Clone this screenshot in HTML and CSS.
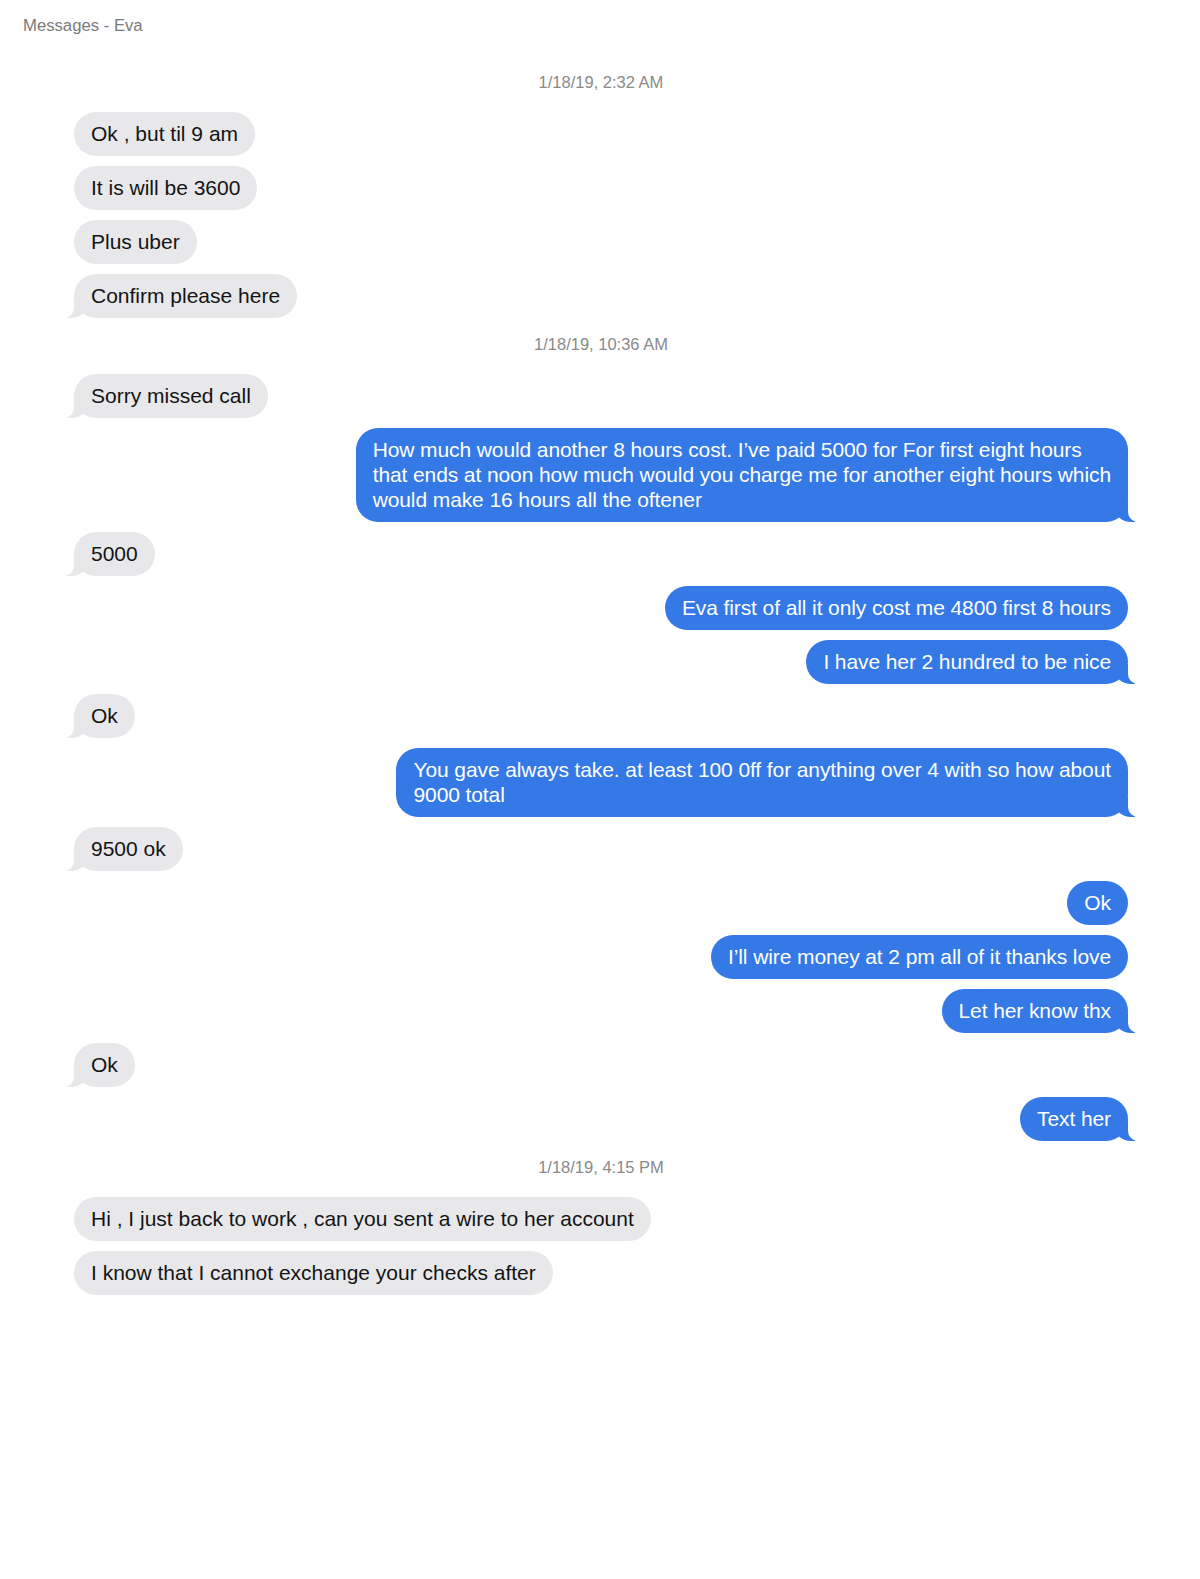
FILE: index.html
```html
<!DOCTYPE html>
<html lang="en">
<head>
<meta charset="utf-8">
<title>Messages - Eva</title>
<link rel="stylesheet" href="styles.css">
</head>
<body>
<div class="page">
  <div class="title">Messages - Eva</div>
  <div class="thread">
    <div class="stamp">1/18/19, 2:32 AM</div>
    <div class="bubble in">Ok , but til 9 am</div>
    <div class="bubble in">It is will be 3600</div>
    <div class="bubble in">Plus uber</div>
    <div class="bubble in tail">Confirm please here</div>
    <div class="stamp">1/18/19, 10:36 AM</div>
    <div class="bubble in tail">Sorry missed call</div>
    <div class="bubble out tail">How much would another 8 hours cost. I’ve paid 5000 for For first eight hours<br>that ends at noon how much would you charge me for another eight hours which<br>would make 16 hours all the oftener</div>
    <div class="bubble in tail">5000</div>
    <div class="bubble out">Eva first of all it only cost me 4800 first 8 hours</div>
    <div class="bubble out tail">I have her 2 hundred to be nice</div>
    <div class="bubble in tail">Ok</div>
    <div class="bubble out tail">You gave always take. at least 100 0ff for anything over 4 with so how about<br>9000 total</div>
    <div class="bubble in tail">9500 ok</div>
    <div class="bubble out">Ok</div>
    <div class="bubble out">I’ll wire money at 2 pm all of it thanks love</div>
    <div class="bubble out tail">Let her know thx</div>
    <div class="bubble in tail">Ok</div>
    <div class="bubble out tail">Text her</div>
    <div class="stamp">1/18/19, 4:15 PM</div>
    <div class="bubble in">Hi , I just back to work , can you sent a wire to her account</div>
    <div class="bubble in">I know that I cannot exchange your checks after</div>
  </div>
</div>
</body>
</html>
```
FILE: styles.css
```css
html, body {
  margin: 0;
  padding: 0;
  background: #ffffff;
}

.page {
  width: 1200px;
  min-height: 1579px;
  box-sizing: border-box;
  padding-top: 16px;
  font-family: "Liberation Sans", Arial, Helvetica, sans-serif;
}

.title {
  padding-left: 23px;
  font-size: 16.7px;
  line-height: 20px;
  color: #7a7a7a;
  margin-bottom: 30px;
}

.thread {
  display: flex;
  flex-direction: column;
  gap: 10px;
  padding: 0 72px 0 74px;
}

.stamp {
  align-self: center;
  font-size: 16.5px;
  line-height: 20px;
  color: #8a8a8a;
  padding: 6px 0 10px;
}

.bubble {
  position: relative;
  font-size: 21px;
  line-height: 25px;
  padding: 9px 17px 10px;
  border-radius: 22px;
  white-space: nowrap;
}

.bubble.in {
  align-self: flex-start;
  background: #e8e8eb;
  color: #141414;
}

.bubble.out {
  align-self: flex-end;
  background: #3479e6;
  color: #ffffff;
  letter-spacing: -0.1px;
}

.bubble.tail::before,
.bubble.tail::after {
  content: "";
  position: absolute;
  bottom: 0;
  height: 20px;
}

.bubble.in.tail::before {
  left: -7px;
  width: 20px;
  background: #e8e8eb;
  border-bottom-right-radius: 16px 14px;
}

.bubble.in.tail::after {
  left: -10px;
  width: 10px;
  background: #ffffff;
  border-bottom-right-radius: 10px;
}

.bubble.out.tail::before {
  right: -7px;
  width: 20px;
  background: #3479e6;
  border-bottom-left-radius: 16px 14px;
}

.bubble.out.tail::after {
  right: -10px;
  width: 10px;
  background: #ffffff;
  border-bottom-left-radius: 10px;
}
```
